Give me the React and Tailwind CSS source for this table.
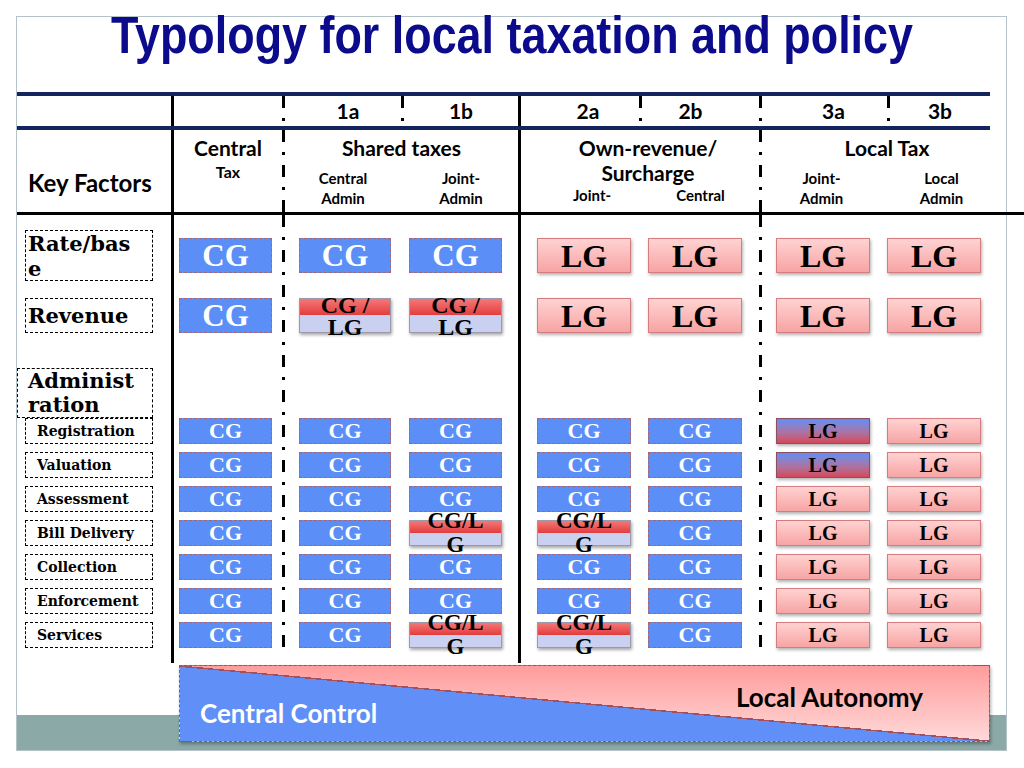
import React from "react";

const SERIF = "font-['Liberation_Serif',serif]";
const LABEL = "font-['DejaVu_Serif',serif]";
const SANS = "font-['Lato',sans-serif]";

const Solid = () => <div className="w-[3px] shrink-0 self-stretch bg-black" />;

const DashDot = ({ cut }) => (
    <div
        className={`w-[3px] shrink-0 self-stretch bg-[repeating-linear-gradient(to_bottom,#000_0px,#000_12px,transparent_12px,transparent_22px,#000_22px,#000_25px,transparent_25px,transparent_35px)] ${cut ? "mb-[8px]" : ""}`}
    />
);

// coloured value boxes
const Box = ({ kind, big, w }) => {
    const h = big ? "h-[35px]" : "h-[26px]";
    const base = `flex ${h} ${w} items-center justify-center font-bold leading-none ${SERIF}`;

    if (kind === "cg") {
        return (
            <div className={`${base} border border-dashed border-[#a8646f] bg-[#5b8ef7] text-white ${big ? "text-[31px]" : "text-[22px]"}`}>
                CG
            </div>
        );
    }
    if (kind === "lg") {
        return (
            <div className={`${base} border border-[#d67c7e] bg-linear-to-b from-[#ffd2d2] to-[#f6a4a4] text-black shadow-[1px_2px_3px_rgba(0,0,0,0.3)] ${big ? "text-[32px]" : "text-[20px]"}`}>
                LG
            </div>
        );
    }
    if (kind === "grad") {
        return (
            <div className={`${base} border border-[#8a5060] bg-linear-to-b from-[#5b8ef7] to-[#d4465a] text-[20px] text-black shadow-[1px_2px_3px_rgba(0,0,0,0.3)]`}>
                LG
            </div>
        );
    }
    // split CG / LG
    return (
        <div className={`${base} border border-[#9a9aaa] bg-[linear-gradient(to_bottom,#f47878_0%,#e23c3c_50%,#c9d0f0_50%,#c9d0f0_100%)] text-black shadow-[1px_2px_3px_rgba(0,0,0,0.35)]`}>
            {big ? (
                <div className="text-center text-[24px] leading-[22px]">
                    CG /<br />LG
                </div>
            ) : (
                <div className="text-center text-[23px] leading-[24px]">
                    CG/L<br />G
                </div>
            )}
        </div>
    );
};

const columns = [
    { col: "w-[108px] pl-[5px]", box: "w-[93px]", rate: "cg", rev: "cg", subs: ["cg", "cg", "cg", "cg", "cg", "cg", "cg"] },
    { col: "w-[119px] pl-[14px]", box: "w-[92px]", rate: "cg", rev: "split", subs: ["cg", "cg", "cg", "cg", "cg", "cg", "cg"] },
    { col: "w-[114px] pl-[5px]", box: "w-[93px]", rate: "cg", rev: "split", subs: ["cg", "cg", "cg", "split", "cg", "cg", "split"] },
    { col: "w-[121px] pl-[16px]", box: "w-[94px]", rate: "lg", rev: "lg", subs: ["cg", "cg", "cg", "split", "cg", "cg", "split"] },
    { col: "w-[117px] pl-[6px]", box: "w-[94px]", rate: "lg", rev: "lg", subs: ["cg", "cg", "cg", "cg", "cg", "cg", "cg"] },
    { col: "w-[125px] pl-[14px]", box: "w-[94px]", rate: "lg", rev: "lg", subs: ["grad", "grad", "lg", "lg", "lg", "lg", "lg"] },
    { col: "w-[103px] pl-[0px]", box: "w-[94px]", rate: "lg", rev: "lg", subs: ["lg", "lg", "lg", "lg", "lg", "lg", "lg"] },
];

const subLabels = ["Registration", "Valuation", "Assessment", "Bill Delivery", "Collection", "Enforcement", "Services"];

const ValueColumn = ({ c }) => (
    <div className={`flex shrink-0 flex-col ${c.col}`}>
        <div className="h-[75px] pt-[23px]">
            <Box kind={c.rate} big w={c.box} />
        </div>
        <div className="h-[55px] pt-[8px]">
            <Box kind={c.rev} big w={c.box} />
        </div>
        <div className="h-[73px]" />
        <div className="flex flex-col gap-[8px]">
            {c.subs.map((k, i) => (
                <Box key={i} kind={k} w={c.box} />
            ))}
        </div>
    </div>
);

const App = () => {
    const [c1, c2, c3, c4, c5, c6, c7] = columns;

    return (
        <div className="h-[768px] w-[1024px] overflow-hidden bg-white pl-[16px] pt-[16px]">
            <div className="flex h-[735px] w-[991px] flex-col border border-[#b6c2c9] bg-[linear-gradient(to_bottom,#ffffff_698px,#8aa9a7_698px)]">
                {/* Title */}
                <div className="flex h-[75px] justify-center">
                    <h1 className="-mt-[4px] scale-x-[0.935] scale-y-[1.08] whitespace-nowrap font-['Liberation_Sans',sans-serif] text-[48px] font-bold leading-[48px] text-[#0b0b8c]">
                        Typology for local taxation and policy
                    </h1>
                </div>

                <div className="h-[4px] w-[973px] bg-[#14245c]" />

                {/* Header row 1 */}
                <div className={`flex h-[30px] w-[973px] text-[21px] font-bold text-black ${SANS}`}>
                    <div className="w-[154px]" />
                    <Solid />
                    <div className="w-[108px]" />
                    <DashDot />
                    <div className="flex w-[116px] items-center justify-center pl-[10px]">1a</div>
                    <DashDot />
                    <div className="flex w-[114px] items-center justify-center">1b</div>
                    <Solid />
                    <div className="flex w-[118px] items-center justify-center pl-[16px]">2a</div>
                    <DashDot />
                    <div className="flex w-[117px] items-center justify-center pr-[20px]">2b</div>
                    <DashDot />
                    <div className="flex w-[125px] items-center justify-center pl-[18px]">3a</div>
                    <DashDot />
                    <div className="flex w-[100px] items-center justify-center">3b</div>
                </div>

                <div className="h-[4px] w-[973px] bg-[#14245c]" />

                {/* Header row 2 */}
                <div className={`flex h-[82px] w-[973px] font-bold text-black ${SANS}`}>
                    <div className="w-[154px] pl-[11px] pt-[38px] text-[24px] leading-[30px]">Key Factors</div>
                    <Solid />
                    <div className="flex w-[108px] flex-col items-center pt-[6px]">
                        <div className="text-[21px] leading-[24px]">Central</div>
                        <div className="text-[16px] leading-[24px]">Tax</div>
                    </div>
                    <DashDot />
                    <div className="flex w-[233px] flex-col pt-[6px]">
                        <div className="text-center text-[21px] leading-[24px]">Shared taxes</div>
                        <div className="mt-[8px] flex text-[15px] leading-[20px]">
                            <div className="w-[116px] text-center">Central<br />Admin</div>
                            <div className="w-[117px] pl-[3px] text-center">Joint-<br />Admin</div>
                        </div>
                    </div>
                    <Solid />
                    <div className="flex w-[238px] flex-col pt-[6px]">
                        <div className="pl-[16px] text-center text-[21px] leading-[24px]">Own-revenue/</div>
                        <div className="pl-[16px] text-center text-[21px] leading-[26px]">Surcharge</div>
                        <div className="flex text-[15px] leading-[18px]">
                            <div className="w-[118px] pl-[24px] text-center">Joint-</div>
                            <div className="w-[120px] pl-[3px] text-center">Central</div>
                        </div>
                    </div>
                    <DashDot />
                    <div className="flex w-[228px] flex-col pt-[6px]">
                        <div className="pl-[22px] text-center text-[21px] leading-[24px]">Local Tax</div>
                        <div className="mt-[8px] flex text-[15px] leading-[20px]">
                            <div className="w-[125px] pr-[6px] text-center">Joint-<br />Admin</div>
                            <div className="w-[103px] pl-[6px] text-center">Local<br />Admin</div>
                        </div>
                    </div>
                </div>

                <div className="h-[3px] w-[1007px] shrink-0 bg-black" />

                {/* Body */}
                <div className="flex h-[448px] w-[973px]">
                    <div className={`flex w-[154px] shrink-0 flex-col font-bold text-black ${LABEL}`}>
                        <div className="h-[75px] pl-[8px] pt-[15px]">
                            <div className="h-[51px] w-[128px] border border-dashed border-black pl-[2px] text-[21px] leading-[25px]">
                                Rate/bas<br />e
                            </div>
                        </div>
                        <div className="h-[55px] pl-[8px] pt-[8px]">
                            <div className="flex h-[35px] w-[128px] items-center border border-dashed border-black pl-[2px] text-[21px]">
                                Revenue
                            </div>
                        </div>
                        <div className="h-[73px] pt-[23px]">
                            <div className="h-[50px] w-[136px] border border-dashed border-black pl-[10px] text-[21px] leading-[24px]">
                                Administ<br />ration
                            </div>
                        </div>
                        <div className="flex flex-col gap-[8px] pl-[8px]">
                            {subLabels.map((s) => (
                                <div key={s} className="flex h-[26px] w-[128px] items-center border border-dashed border-black pl-[11px] text-[14px] leading-none">
                                    {s}
                                </div>
                            ))}
                        </div>
                    </div>
                    <Solid />
                    <ValueColumn c={c1} />
                    <DashDot cut />
                    <ValueColumn c={c2} />
                    <ValueColumn c={c3} />
                    <Solid />
                    <ValueColumn c={c4} />
                    <ValueColumn c={c5} />
                    <DashDot cut />
                    <ValueColumn c={c6} />
                    <ValueColumn c={c7} />
                </div>

                {/* Control / autonomy scale */}
                <div
                    className={`ml-[162px] mt-[2px] flex h-[77px] w-[811px] justify-between border border-dashed border-[#a0505e] bg-[linear-gradient(to_top_right,#5f8ff7_49.4%,#a0505e_49.4%,#a0505e_50.4%,transparent_50.4%),linear-gradient(to_bottom,#ff9c9c,#ffd9d9)] text-[26px] font-bold shadow-[1px_2px_3px_rgba(0,0,0,0.3)] ${SANS}`}
                >
                    <div className="self-end pb-[14px] pl-[20px] leading-[28px] text-white">Central Control</div>
                    <div className="self-start pr-[66px] pt-[17px] leading-[28px] text-black">Local Autonomy</div>
                </div>
            </div>
        </div>
    );
};

export default App;
